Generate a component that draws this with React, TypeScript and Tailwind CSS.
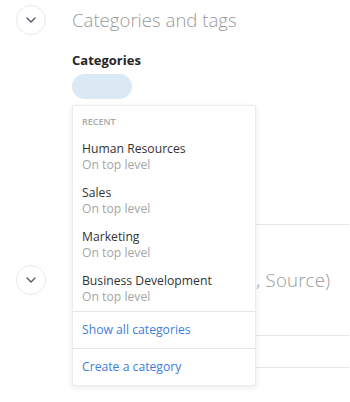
import React from 'react'

const recent = ['Human Resources', 'Sales', 'Marketing', 'Business Development']

const Toggle: React.FC = () => (
  <div className="flex h-[30px] w-[30px] shrink-0 items-center justify-center rounded-full border border-[#e8e8e8] bg-white">
    <svg width="10" height="6" viewBox="0 0 10 6" fill="none">
      <path d="M1 1l4 4 4-4" stroke="#4d5b6a" strokeWidth="1.4" strokeLinecap="round" strokeLinejoin="round" />
    </svg>
  </div>
)

export default function App() {
  return (
    <div className="relative h-[402px] w-[350px] overflow-hidden bg-white font-['Open_Sans',sans-serif]">
      {/* Categories and tags */}
      <div className="flex items-center pl-4 pt-[5px]">
        <Toggle />
        <h2 className="ml-[26px] text-[18.6px] font-light leading-[30px] text-[#9a9a9a]">Categories and tags</h2>
      </div>

      <div className="mr-px ml-[72px] border-b border-[#e8e8e8] pb-[125px] pt-[16px]">
        <div className="text-[13px] font-bold leading-[18px] text-[#262626]">Categories</div>
        <div className="relative mt-[5px]">
          <div className="h-[25px] w-[60px] rounded-full bg-[#dbe9f4]" />

          {/* dropdown */}
          <div className="absolute left-0 top-[31px] z-10 w-[184px] border border-[#ececec] bg-white shadow-[0_2px_6px_rgba(0,0,0,0.08)]">
            <div className="px-[9px] pt-[10px] text-[9px] font-semibold uppercase leading-[12px] text-[#a8a8a8]">Recent</div>
            <div className="pb-[6px] pt-[13px]">
              {recent.map((name) => (
                <div key={name} className="px-[9px] pb-[12px] last:pb-0">
                  <div className="text-[12.2px] leading-[16px] text-[#333]">{name}</div>
                  <div className="text-[12.2px] leading-[16px] text-[#a6a6a6]">On top level</div>
                </div>
              ))}
            </div>
            <div className="border-t border-[#e6e6e6] px-[9px] py-[9px] text-[12.2px] leading-[18px] text-[#3d7ddb]">Show all categories</div>
            <div className="border-t border-[#e6e6e6] px-[9px] pb-[9px] pt-[9px] text-[12.2px] leading-[18px] text-[#3d7ddb]">Create a category</div>
          </div>
        </div>
      </div>

      {/* Second section */}
      <div className="flex items-center pl-4 pt-[40px]">
        <Toggle />
        <h2 className="ml-[26px] whitespace-nowrap text-[18.6px] font-light leading-[30px] tracking-[0.2px] text-[#9a9a9a]">Responsibility (Owner, Source)</h2>
      </div>

      <div className="mr-px ml-[72px] mt-[40px] h-[33px] border-y border-[#e8e8e8]" />

      <div className="ml-[72px] mt-[30px] text-[13px] font-bold leading-[18px] text-[#262626]">Source</div>
    </div>
  )
}
